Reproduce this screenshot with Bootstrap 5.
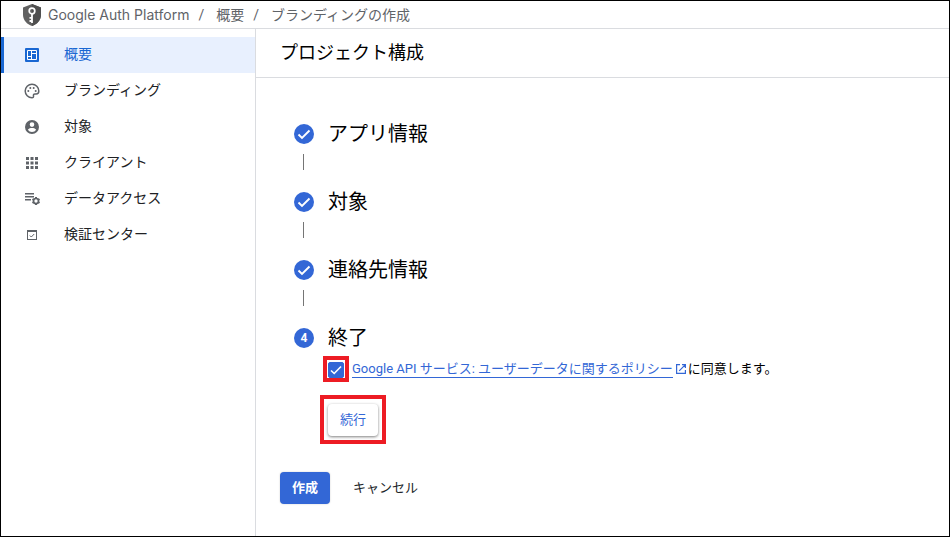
<!DOCTYPE html>
<html lang="ja">
<head>
<meta charset="utf-8">
<meta name="viewport" content="width=device-width, initial-scale=1">
<title>ブランディングの作成 – Google Auth Platform</title>
<link href="https://cdn.jsdelivr.net/npm/bootstrap@5.3.0/dist/css/bootstrap.min.css" rel="stylesheet">
<style>
:root { --blue: #3367d6; --nav-blue: #1967d2; --grey: #5f6368; --line: #dadce0; --red: #ed1c24; }
body { font-family: Roboto, "Noto Sans CJK JP", sans-serif; font-size: 14px; line-height: 20px; color: #000; background: #fff; }
.frame { border: 1px solid #000; }
.topbar { height: 28px; padding-left: 20px; border-bottom: 1px solid var(--line); color: var(--grey); }
.topbar a { color: inherit; }
.topbar .product { font-family: Inter, sans-serif; margin-left: 5px; }
.topbar .breadcrumb-item + .breadcrumb-item { padding-left: 9px; }
.topbar .breadcrumb-item + .breadcrumb-item::before { padding-right: 12px; color: var(--grey); }
.sidebar { width: 255px; padding-top: 8px; border-right: 1px solid var(--line); }
.sidebar .nav-link { height: 36px; padding: 0 0 2px 18px; border-left: 3px solid transparent; gap: 22px; color: #202124; }
.sidebar .nav-link svg { width: 20px; height: 20px; margin-top: 2px; fill: var(--grey); }
.sidebar .nav-link.active { background: #e8f0fe; border-left-color: var(--nav-blue); color: var(--nav-blue); }
.sidebar .nav-link.active svg { fill: var(--nav-blue); }
.page-title { height: 49px; padding: 0 24px; font-size: 18px; border-bottom: 1px solid var(--line); }
.content { padding: 44px 24px 24px; }
.steps { padding-left: 14px; }
.step-head { height: 24px; gap: 14px; }
.step-name { font-size: 20px; line-height: 24px; }
.bullet { width: 20px; height: 20px; border-radius: 50%; background: var(--blue); color: #fff; font-size: 12px; font-weight: 700; }
.connector { width: 1px; height: 16px; margin: 8px 0 20px 9px; background: #757575; }
.final { padding-left: 26px; font-size: 13px; }
.agree { margin: 6px 0 13px 3px; gap: 3px; }
.ring { border: 4px solid var(--red); }
.ring-check { padding: 2px 1px 0; }
.ring-button { padding: 5px 4px 4px; }
.agree .form-check-input { width: 16px; height: 16px; border-radius: 2px; border-color: var(--blue); }
.agree .form-check-input:checked { background-color: var(--blue); border-color: var(--blue); background-size: 16px; background-image: url("data:image/svg+xml,%3Csvg xmlns='http://www.w3.org/2000/svg' viewBox='0 0 16 16'%3E%3Cpath d='M3 8.5 6.2 11.5 13 4.5' fill='none' stroke='%23fff' stroke-width='1.6'/%3E%3C/svg%3E"); }
.policy { color: var(--blue); border-bottom: 1px solid var(--blue); line-height: 17px; }
.agree-text svg { margin: 0 1px 0 2px; }
.action { height: 32px; min-width: 50px; padding: 0 11px; font-size: 13px; line-height: 20px; border: 0; border-radius: 4px; }
.action-raised { color: var(--blue); background: #fff; box-shadow: 0 1px 3px rgba(0,0,0,.5); }
.action-main, .action-main:hover { color: #fff; background: var(--blue); font-weight: 700; box-shadow: 0 0 2px rgba(0,0,0,.2); }
.form-actions { margin-top: 28px; gap: 12px; }
</style>
<script src="https://cdn.jsdelivr.net/npm/bootstrap@5.3.0/dist/js/bootstrap.bundle.min.js"></script>
</head>
<body>
<div class="frame min-vh-100 d-flex flex-column">
  <header class="topbar d-flex align-items-center">
    <svg width="22" height="24" viewBox="0 0 22 24" aria-hidden="true">
      <path d="M11 1 20 4.500V12c0 5-4 9.500-9 11-5-1.500-9-6-9-11V4.500z" fill="#616161"/>
      <path d="M11 1 20 4.500V12c0 5-4 9.500-9 11z" fill="#505050"/>
      <circle cx="11" cy="8" r="2.800" fill="none" stroke="#fff" stroke-width="1.700"/>
      <path d="M11 10.500V20M11 14.800H8.500M11 18H8.500" fill="none" stroke="#fff" stroke-width="1.800"/>
    </svg>
    <nav aria-label="パンくず">
      <ol class="breadcrumb mb-0">
        <li class="breadcrumb-item product"><a class="text-decoration-none" href="#">Google Auth Platform</a></li>
        <li class="breadcrumb-item"><a class="text-decoration-none" href="#">概要</a></li>
        <li class="breadcrumb-item" aria-current="page">ブランディングの作成</li>
      </ol>
    </nav>
  </header>

  <div class="d-flex flex-grow-1">
    <nav class="sidebar nav flex-column flex-nowrap flex-shrink-0" aria-label="メニュー">
      <a class="nav-link active d-flex align-items-center" aria-current="page" href="#">
        <svg viewBox="0 0 20 20"><rect x="3" y="3" width="14" height="14" rx="1"/><path d="M5.500 5.500h9v9h-9zM9.500 5.500v9M5.500 11.500h4M9.500 8.500h5" fill="none" stroke="#fff"/></svg>
        概要</a>
      <a class="nav-link d-flex align-items-center" href="#">
        <svg viewBox="0 0 20 20"><path d="M10 3.300c-3.800 0-6.800 3-6.800 6.700s3 6.700 6.800 6.700c1.200 0 1.700-.8 1.500-1.700-.3-1.300.2-2 1.400-2h1.300c1.500 0 2.600-1.200 2.600-3 0-3.700-3-6.700-6.800-6.700z" fill="none" stroke="#5f6368" stroke-width="1.500"/><circle cx="6.300" cy="10" r="1"/><circle cx="8.300" cy="7" r="1"/><circle cx="11.700" cy="7" r="1"/><circle cx="13.700" cy="10" r="1"/></svg>
        ブランディング</a>
      <a class="nav-link d-flex align-items-center" href="#">
        <svg viewBox="0 0 20 20"><path fill-rule="evenodd" d="M10 3a7 7 0 1 0 0 14 7 7 0 0 0 0-14zm0 2.300a2.300 2.300 0 1 1 0 4.600 2.300 2.300 0 0 1 0-4.600zM5.800 12.700c.8-1.300 3-1.700 4.200-1.700s3.400.4 4.200 1.700a5 5 0 0 1-8.400 0z"/></svg>
        対象</a>
      <a class="nav-link d-flex align-items-center" href="#">
        <svg viewBox="0 0 20 20"><path d="M4 4h3v3H4zM8.500 4h3v3h-3zM13 4h3v3h-3zM4 8.500h3v3H4zM8.500 8.500h3v3h-3zM13 8.500h3v3h-3zM4 13h3v3H4zM8.500 13h3v3h-3zM13 13h3v3h-3z"/></svg>
        クライアント</a>
      <a class="nav-link d-flex align-items-center" href="#">
        <svg viewBox="0 0 20 20"><path d="M3 4h9v1.500H3zM3 7h9v1.500H3zM3 10h6v1.500H3z"/><circle cx="14" cy="12" r="2.500" fill="none" stroke="#5f6368" stroke-width="1.700"/><path d="M14 8v1.500M14 14.500V16M10.500 10l1.300.8M16.200 13.200l1.300.8M10.500 14l1.300-.8M16.200 10.800l1.300-.8" stroke="#5f6368" stroke-width="2"/></svg>
        データアクセス</a>
      <a class="nav-link d-flex align-items-center" href="#">
        <svg viewBox="0 0 20 20"><path fill-rule="evenodd" d="M5 5h10v10H5zM6 7v7h8V7z"/><path d="M7.800 10.500 9.300 12 12.200 9" fill="none" stroke="#5f6368"/></svg>
        検証センター</a>
    </nav>

    <main class="flex-grow-1">
      <h1 class="page-title d-flex align-items-center mb-0 fw-normal">プロジェクト構成</h1>
      <form class="content">
        <div class="steps">
          <div class="step-head d-flex align-items-center">
            <span class="bullet"><svg class="d-block" width="20" height="20" viewBox="0 0 20 20"><path d="M4.500 10.500 8 14 15.500 6.500" fill="none" stroke="#fff" stroke-width="1.900"/></svg></span>
            <h2 class="step-name mb-0 fw-normal">アプリ情報</h2>
          </div>
          <div class="connector"></div>
          <div class="step-head d-flex align-items-center">
            <span class="bullet"><svg class="d-block" width="20" height="20" viewBox="0 0 20 20"><path d="M4.500 10.500 8 14 15.500 6.500" fill="none" stroke="#fff" stroke-width="1.900"/></svg></span>
            <h2 class="step-name mb-0 fw-normal">対象</h2>
          </div>
          <div class="connector"></div>
          <div class="step-head d-flex align-items-center">
            <span class="bullet"><svg class="d-block" width="20" height="20" viewBox="0 0 20 20"><path d="M4.500 10.500 8 14 15.500 6.500" fill="none" stroke="#fff" stroke-width="1.900"/></svg></span>
            <h2 class="step-name mb-0 fw-normal">連絡先情報</h2>
          </div>
          <div class="connector"></div>
          <div class="step-head d-flex align-items-center">
            <span class="bullet d-flex align-items-center justify-content-center">4</span>
            <h2 class="step-name mb-0 fw-normal">終了</h2>
          </div>
          <div class="final">
            <div class="agree d-flex align-items-center">
              <span class="ring ring-check d-flex"><input class="form-check-input m-0" type="checkbox" id="agree" checked></span>
              <label class="agree-text d-flex align-items-center" for="agree"><a class="policy text-decoration-none" href="#">Google API サービス: ユーザーデータに関するポリシー</a><svg width="12" height="12" viewBox="0 0 12 12" fill="none" stroke="#3367d6" stroke-width="1.200"><path d="M5 1.600H1.600v8.800h8.800V7M7 1.600h3.400V5M10.400 1.600 4.200 7.800"/></svg>に同意します。</label>
            </div>
            <span class="ring ring-button d-inline-flex align-top"><button type="button" class="btn action action-raised">続行</button></span>
          </div>
        </div>
        <div class="form-actions d-flex">
          <button type="submit" class="btn action action-main">作成</button>
          <button type="button" class="btn action">キャンセル</button>
        </div>
      </form>
    </main>
  </div>
</div>
</body>
</html>
